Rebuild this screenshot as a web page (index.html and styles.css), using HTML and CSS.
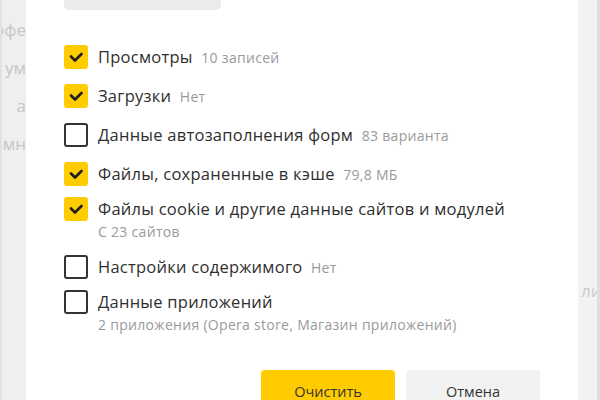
FILE: index.html
```html
<!DOCTYPE html>
<html lang="ru">
<head>
<meta charset="utf-8">
<title>Очистить историю</title>
<link rel="stylesheet" href="styles.css">
</head>
<body>
<div class="page">
  <div class="side side-left">
    <div class="ghost">офе</div>
    <div class="ghost">ум</div>
    <div class="ghost">а</div>
    <div class="ghost">мн</div>
  </div>
  <div class="dialog">
    <div class="top-btn"></div>
    <ul class="list">
      <li class="row">
        <span class="box checked"><svg viewBox="0 0 24 24"><path d="M7 11.5l4 4 6.5-6.5"/></svg></span>
        <div class="label"><div class="line">Просмотры <span class="hint">10 записей</span></div></div>
      </li>
      <li class="row">
        <span class="box checked"><svg viewBox="0 0 24 24"><path d="M7 11.5l4 4 6.5-6.5"/></svg></span>
        <div class="label"><div class="line">Загрузки <span class="hint">Нет</span></div></div>
      </li>
      <li class="row">
        <span class="box"></span>
        <div class="label"><div class="line">Данные автозаполнения форм <span class="hint">83 варианта</span></div></div>
      </li>
      <li class="row compact">
        <span class="box checked"><svg viewBox="0 0 24 24"><path d="M7 11.5l4 4 6.5-6.5"/></svg></span>
        <div class="label"><div class="line">Файлы, сохраненные в кэше <span class="hint">79,8 МБ</span></div></div>
      </li>
      <li class="row">
        <span class="box checked"><svg viewBox="0 0 24 24"><path d="M7 11.5l4 4 6.5-6.5"/></svg></span>
        <div class="label">
          <div class="line">Файлы cookie и другие данные сайтов и модулей</div>
          <div class="sub">С 23 сайтов</div>
        </div>
      </li>
      <li class="row compact">
        <span class="box"></span>
        <div class="label"><div class="line">Настройки содержимого <span class="hint">Нет</span></div></div>
      </li>
      <li class="row">
        <span class="box"></span>
        <div class="label">
          <div class="line">Данные приложений</div>
          <div class="sub">2 приложения (Opera store, Магазин приложений)</div>
        </div>
      </li>
    </ul>
    <div class="actions">
      <button class="btn btn-primary">Очистить</button>
      <button class="btn btn-secondary">Отмена</button>
    </div>
  </div>
  <div class="side side-right">
    <div class="ghost ghost-right">ли</div>
  </div>
</div>
</body>
</html>
```
FILE: styles.css
```css
* { box-sizing: border-box; }
html, body {
  margin: 0;
  padding: 0;
  width: 600px;
  height: 400px;
  overflow: hidden;
  background: #ffffff;
  font-family: "Open Sans", "Noto Sans", "Liberation Sans", sans-serif;
}
.page {
  display: flex;
  width: 600px;
  height: 400px;
}
.side {
  background: #efefef;
  overflow: hidden;
  white-space: nowrap;
}
.side-left {
  width: 26px;
  flex: none;
  border-left: 2px solid #e2e2e2;
  padding-top: 19px;
  display: flex;
  flex-direction: column;
  align-items: flex-end;
  gap: 16px;
}
.side-right {
  width: 22px;
  flex: none;
  background: #f2f2f2;
  border-right: 3px solid #dedede;
  padding-top: 280px;
}
.ghost {
  font-size: 17px;
  line-height: 22px;
  color: #c6c6c6;
}
.ghost-right {
  color: #c9ccd2;
  padding-left: 3px;
}
.dialog {
  flex: 1;
  background: #ffffff;
  padding: 0 38px;
  display: flex;
  flex-direction: column;
}
.dialog > * { flex: none; }
.top-btn {
  width: 157px;
  height: 10px;
  background: #ebebeb;
  border-radius: 0 0 5px 5px;
}
.list {
  list-style: none;
  margin: 35px 0 0;
  padding: 0;
}
.row {
  display: flex;
  align-items: flex-start;
  gap: 10px;
  padding-bottom: 14px;
}
.row.compact { padding-bottom: 10px; }
.box {
  width: 24px;
  height: 24px;
  flex: none;
  border: 2px solid #333333;
  border-radius: 3px;
  background: #ffffff;
}
.box.checked {
  border: none;
  background: #ffcc00;
}
.box svg {
  display: block;
  width: 24px;
  height: 24px;
}
.box svg path {
  fill: none;
  stroke: #1e1e1e;
  stroke-width: 2.6;
  stroke-linecap: round;
  stroke-linejoin: round;
}
.label { color: #2f2f2f; }
.line {
  font-size: 16.5px;
  letter-spacing: 0.25px;
  line-height: 24px;
}
.hint {
  font-size: 14px;
  letter-spacing: 0.3px;
  color: #9a9a9a;
  margin-left: 4px;
}
.sub {
  font-size: 14px;
  letter-spacing: 0.3px;
  line-height: 18px;
  color: #9a9a9a;
  padding-top: 2px;
}
.actions {
  margin-top: 22px;
  display: flex;
  justify-content: flex-end;
  gap: 11px;
}
.btn {
  width: 134px;
  height: 42px;
  border: none;
  border-radius: 4px;
  font-family: inherit;
  font-size: 14.5px;
  color: #333333;
  padding: 0;
}
.btn-primary { background: #ffcc00; }
.btn-secondary { background: #f2f2f2; }
```
